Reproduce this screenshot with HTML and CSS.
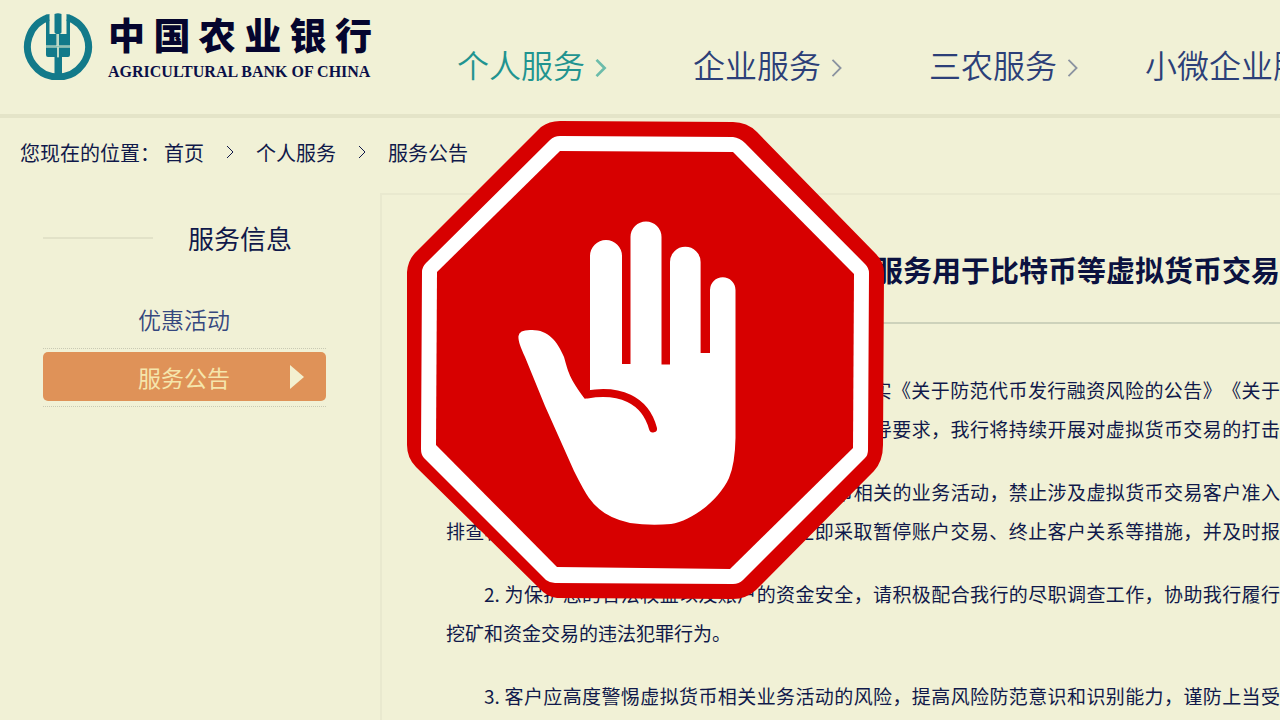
FILE: index.html
```html
<!DOCTYPE html>
<html lang="zh-CN">
<head>
  <meta charset="UTF-8" />
  <meta name="viewport" content="width=device-width, initial-scale=1" />
  <title>中国农业银行 - 服务公告</title>
  <link rel="stylesheet" href="styles.css">
</head>
<body>

  <header class="header">
    <a href="#" class="logo">
      <svg class="logo-mark" viewBox="23 12 70 68" aria-hidden="true">
        <path d="M48.500 17.500 A30.500 30.500 0 1 0 67.500 17.500" fill="none" stroke="#127a8a" stroke-width="7" />
        <path d="M45 15 L49.500 14 V34 H56.500 V45.500 H46 V23 Z M70.500 15 L66.500 14 V34 H59 V45.500 H70 V23 Z" fill="#127a8a" />
        <path d="M54.500 14 Q58 12.500 61.500 14 V32 Q61.500 34 58 34 Q54.500 34 54.500 32 Z" fill="#127a8a" />
        <path d="M46 47.500 H57 V57 H48 Q46 57 46 55 Z M59 47.500 H70 V55 Q70 57 68 57 H59 Z M54.500 57 H62 V77 H54.500 Z" fill="#127a8a" />
        <path d="M58 34 V58 M46 46.500 H70" stroke="#8fc3b4" stroke-width="1" />
      </svg>
      <span class="logo-text">
        <span class="logo-cn">中国农业银行</span>
        <span class="logo-en">AGRICULTURAL BANK OF CHINA</span>
      </span>
    </a>
    <nav class="nav">
      <a href="#" class="active">个人服务<svg class="chevron" viewBox="0 0 12 20"><path d="M1 1 L10 10 L1 19" /></svg></a>
      <a href="#">企业服务<svg class="chevron" viewBox="0 0 12 20"><path d="M1 1 L10 10 L1 19" /></svg></a>
      <a href="#">三农服务<svg class="chevron" viewBox="0 0 12 20"><path d="M1 1 L10 10 L1 19" /></svg></a>
      <a href="#" class="wide">小微企业服务<svg class="chevron" viewBox="0 0 12 20"><path d="M1 1 L10 10 L1 19" /></svg></a>
    </nav>
  </header>

  <div class="breadcrumb">
    <span>您现在的位置：</span>
    <a href="#">首页</a>
    <svg class="sep" viewBox="0 0 8 14"><path d="M1 1 L7 7 L1 13" /></svg>
    <a href="#">个人服务</a>
    <svg class="sep" viewBox="0 0 8 14"><path d="M1 1 L7 7 L1 13" /></svg>
    <a href="#">服务公告</a>
  </div>

  <div class="main">
    <aside class="sidebar">
      <h2>服务信息</h2>
      <ul>
        <li><a href="#">优惠活动</a></li>
        <li class="current"><a href="#">服务公告<svg class="arrow" viewBox="0 0 14 24"><path d="M0 0 L14 12 L0 24 Z" /></svg></a></li>
      </ul>
    </aside>

    <article class="notice">
      <h1>关于禁止使用我行服务用于比特币等虚拟货币交易</h1>
      <div class="notice-body">
        <p class="full">为保护社会公众的财产权益，我行坚决贯彻落实《关于防范代币发行融资风险的公告》《关于防范比特币风险的通知》等文件精神及监管部门指导要求，我行将持续开展对虚拟货币交易的打击</p>
        <p class="full">1. 我行坚决不开展、不参与任何与虚拟货币相关的业务活动，禁止涉及虚拟货币交易客户准入排查相关客户及资金交易，发现可疑行为立即采取暂停账户交易、终止客户关系等措施，并及时报</p>
        <p>2. 为保护您的合法权益以及账户的资金安全，请积极配合我行的尽职调查工作，协助我行履行挖矿和资金交易的违法犯罪行为。</p>
        <p class="full">3. 客户应高度警惕虚拟货币相关业务活动的风险，提高风险防范意识和识别能力，谨防上当受</p>
      </div>
    </article>
  </div>

  <!-- stop sign over the page -->
  <svg class="stop-sign" viewBox="407 121 477 478" role="img" aria-label="禁止">
    <path class="red" d="M560 121 L733 122 Q747 122 757 132 L876 254 Q884 262 884 273 L883 445 Q883 461 874 471 L756 590 Q746 599 733 599 L557 598 Q547 597 539 588 L416 467 Q407 458 407 445 L407 272 Q408 259 417 251 L541 127 Q549 121 560 121 Z" />
    <path class="white" d="M560 136 L733 137 Q740 138 745 143 L865 264 Q869 268 869 273 L868 450 Q868 455 865 458 L743 580 Q739 584 733 584 L555 583 Q550 583 546 580 L424 458 Q421 455 421 449 L422 272 Q422 267 426 263 L550 140 Q554 136 560 136 Z" />
    <path class="red" d="M560 151 L733 152 L854 274 L853 448 L730 569 L557 567 L436 445 L437 272 Z" />
    <path class="white" d="M590 390 V256 A16 16 0 0 1 622 256 V364 H630.500 V237 A15.500 15.500 0 0 1 661.500 237 V364.500 H670 V262 A15.300 15.300 0 0 1 700.600 262 V353 H710 V290 A12.700 12.700 0 0 1 735.500 290 V438 Q735 464 729 478 C719 500 692 521 671 524 Q650 526 630 523 Q602 517 589 498 Q584 491 574 471 L545 406 L525 357 C520 346 518 340 518.500 336 Q519 330 530 330 C547 329 557 340 564 357 C568 371 569 378 585 399 Z" />
    <path class="palm-line" d="M587 394.500 C619 389 645 399 653 428.500" />
  </svg>

</body>
</html>
```
FILE: styles.css
```css
* {
  box-sizing: border-box;
}
body {
  margin: 0;
  min-height: 100vh;
  background: #f1f1d6;
  color: #10194a;
  font-family: "Noto Sans CJK SC", sans-serif;
  overflow-x: hidden;
}
a {
  color: inherit;
  text-decoration: none;
}
.header {
  display: flex;
  height: 118px;
  border-bottom: 4px solid #e4e4c8;
  white-space: nowrap;
}
.logo {
  display: flex;
  flex: none;
  gap: 15px;
  width: 414px;
  padding: 12px 0 0 23px;
}
.logo-mark {
  width: 70px;
  height: 68px;
}
.logo-text {
  width: 264px;
}
.logo-cn {
  display: block;
  color: #05052e;
  font-size: 37px;
  line-height: 44px;
  margin-bottom: 4px;
  font-weight: 900;
  text-align-last: justify;
  text-justify: inter-character;
}
.logo-en {
  display: block;
  color: #0a0f48;
  font-family: "Liberation Serif", serif;
  font-size: 16px;
  line-height: 24px;
  font-weight: bold;
}
.nav {
  display: flex;
  padding-top: 40px;
}
.nav a {
  display: flex;
  align-items: center;
  gap: 10px;
  height: 48px;
  padding: 0 43px;
  color: #2c3f78;
  font-size: 32px;
  font-weight: 350;
}
.nav .wide {
  padding: 0 23px;
}
.nav .active {
  color: #219490;
}
.chevron {
  width: 12px;
  height: 18px;
  margin-top: 8px;
  fill: none;
  stroke: #8b93a0;
  stroke-width: 2;
}
.active .chevron {
  stroke: #6cbcaa;
  stroke-width: 3;
}
.breadcrumb {
  display: flex;
  align-items: center;
  height: 68px;
  padding-left: 20px;
  font-size: 20px;
}
.breadcrumb span {
  margin-right: 4px;
}
.sep {
  width: 8px;
  height: 14px;
  margin: 0 22px;
  fill: none;
  stroke: #10194a;
}
.main {
  display: flex;
  margin-top: 7px;
}
.sidebar {
  flex: none;
  width: 380px;
  padding: 25px 54px 0 43px;
}
.sidebar h2 {
  display: flex;
  align-items: center;
  gap: 35px;
  margin: 0;
  font-size: 26px;
  line-height: 40px;
  font-weight: normal;
}
.sidebar h2::before {
  content: "";
  width: 110px;
  height: 2px;
  background: #e2e2c8;
}
.sidebar ul {
  margin: 36px 0 0;
  padding: 0;
  list-style: none;
  font-size: 23px;
  text-align: center;
}
.sidebar li {
  padding-bottom: 5px;
  border-bottom: 1px dotted #c9cab4;
}
.sidebar li a {
  display: flex;
  align-items: center;
  height: 49px;
  padding: 0 22px 0 95px;
  color: #35477e;
  font-weight: 350;
}
.sidebar .current {
  padding-top: 3px;
}
.sidebar .current a {
  justify-content: space-between;
  border-radius: 5px;
  background: #df9258;
  color: #f5e6ac;
  font-weight: normal;
}
.arrow {
  width: 14px;
  height: 24px;
  fill: #f3f0d0;
}
.notice {
  flex: 1;
  min-width: 0;
  padding: 0 0 16px 64px;
  border: 2px solid #e9e9cf;
  border-width: 2px 0 0 2px;
}
.notice h1 {
  margin: 0;
  padding: 48px 0 27px;
  border-bottom: 2px solid #cdd2bb;
  color: #0b1240;
  font-size: 29px;
  line-height: 52px;
  font-weight: bold;
  text-align: right;
  white-space: nowrap;
}
.notice-body {
  padding-top: 46px;
  font-size: 19px;
  line-height: 39px;
  text-align: justify;
  text-spacing-trim: space-all;
}
.notice-body p {
  margin: 0 0 24px;
  text-indent: 2em;
}
.notice-body p:last-child {
  margin-bottom: 0;
}
.notice-body .full {
  text-align-last: justify;
}
.stop-sign {
  position: absolute;
  left: 407px;
  top: 121px;
  width: 477px;
  height: 478px;
}
.red {
  fill: #d70000;
}
.white {
  fill: #fff;
}
.palm-line {
  fill: none;
  stroke: #d70000;
  stroke-width: 8;
  stroke-linecap: round;
}
```
